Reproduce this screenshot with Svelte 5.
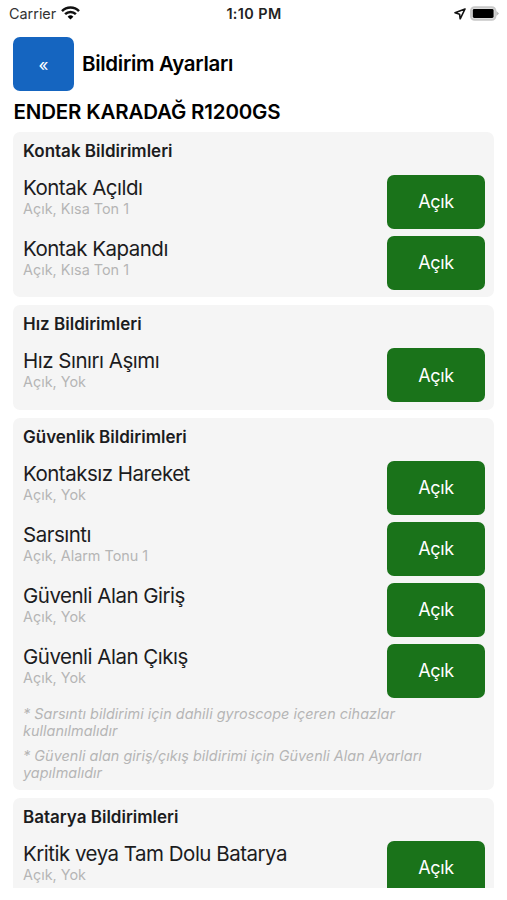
<script>
  const device = 'ENDER KARADAĞ R1200GS';

  let groups = $state([
    {
      title: 'Kontak Bildirimleri',
      items: [
        { name: 'Kontak Açıldı', tone: 'Kısa Ton 1', on: true },
        { name: 'Kontak Kapandı', tone: 'Kısa Ton 1', on: true },
      ],
      notes: [],
    },
    {
      title: 'Hız Bildirimleri',
      items: [{ name: 'Hız Sınırı Aşımı', tone: 'Yok', on: true }],
      notes: [],
    },
    {
      title: 'Güvenlik Bildirimleri',
      items: [
        { name: 'Kontaksız Hareket', tone: 'Yok', on: true },
        { name: 'Sarsıntı', tone: 'Alarm Tonu 1', on: true },
        { name: 'Güvenli Alan Giriş', tone: 'Yok', on: true },
        { name: 'Güvenli Alan Çıkış', tone: 'Yok', on: true },
      ],
      notes: [
        '* Sarsıntı bildirimi için dahili gyroscope içeren cihazlar kullanılmalıdır',
        '* Güvenli alan giriş/çıkış bildirimi için Güvenli Alan Ayarları yapılmalıdır',
      ],
    },
    {
      title: 'Batarya Bildirimleri',
      items: [{ name: 'Kritik veya Tam Dolu Batarya', tone: 'Yok', on: true }],
      notes: [],
    },
  ]);

  const label = (on) => (on ? 'Açık' : 'Kapalı');
</script>

<div class="screen">
  <div class="status">
    <div class="carrier">
      <span>Carrier</span>
      <svg width="19" height="14" viewBox="0 0 19 14">
        <path d="M1 5.1a12 12 0 0 1 17 0" />
        <path d="M4.1 8.2a7.6 7.6 0 0 1 10.8 0" />
        <path class="fill" d="M9.5 13.6 6.6 10.7a4.1 4.1 0 0 1 5.8 0z" />
      </svg>
    </div>
    <div class="clock">1:10 PM</div>
    <div class="power">
      <svg width="12" height="12" viewBox="0 0 12 12">
        <path class="arrow" d="M11 1 1 4.8 5.6 6.2 6.2 10.8z" />
      </svg>
      <svg width="29" height="16" viewBox="0 0 29 16">
        <rect class="shell" x="1" y="1.2" width="24.4" height="12.6" rx="3.6" />
        <rect class="fill" x="2.8" y="3" width="20.8" height="9" rx="1.4" />
        <path class="cap" d="M26.4 5 29 7.5 26.4 10z" />
      </svg>
    </div>
  </div>

  <header>
    <button class="back">«</button>
    <h1>Bildirim Ayarları</h1>
  </header>

  <main>
    <h2>{device}</h2>
    {#each groups as group}
      <section>
        <h3>{group.title}</h3>
        {#each group.items as item}
          <div class="row">
            <div class="info">
              <div class="name">{item.name}</div>
              <div class="detail">{label(item.on)}, {item.tone}</div>
            </div>
            <button class="toggle" class:off={!item.on} onclick={() => (item.on = !item.on)}>
              {label(item.on)}
            </button>
          </div>
        {/each}
        {#each group.notes as note}
          <p>{note}</p>
        {/each}
      </section>
    {/each}
  </main>
</div>

<style>
  :global(body) {
    background: #fff;
  }

  .screen {
    display: flex;
    flex-direction: column;
    box-sizing: border-box;
    height: 900px;
    padding: 0 13px 12px;
    overflow: hidden;
    font-family: Inter, sans-serif;
    color: #1c1c1e;
  }

  .status {
    display: grid;
    grid-template-columns: 1fr auto 1fr;
    align-items: center;
    flex: none;
    height: 27px;
    margin: 0 -5px 0 -4px;
    font-size: 14.4px;
    color: #333;
  }

  .carrier,
  .power {
    display: flex;
    align-items: center;
    gap: 5px;
  }

  .carrier svg {
    margin-top: -2px;
  }

  .power {
    justify-content: flex-end;
    gap: 4px;
  }

  .clock {
    font-weight: 600;
    letter-spacing: 0.4px;
    color: #222;
  }

  svg path {
    fill: none;
    stroke: #111;
    stroke-width: 2.5;
  }

  svg .fill {
    fill: #000;
    stroke: none;
  }

  svg .arrow {
    stroke-width: 1.6;
    stroke-linejoin: round;
  }

  .shell {
    fill: #e4e4e4;
    stroke: #c8c8c8;
    stroke-width: 2;
  }

  svg .cap {
    fill: #b8b8b8;
    stroke: none;
  }

  header {
    display: flex;
    align-items: center;
    flex: none;
    gap: 8px;
    height: 54px;
    margin-top: 10.4px;
  }

  button {
    padding: 0;
    border: none;
    border-radius: 7px;
    font-family: inherit;
    color: #fff;
    cursor: pointer;
  }

  .back {
    width: 61px;
    height: 54px;
    padding-top: 1px;
    background: #1565c0;
    font-size: 17px;
  }

  h1,
  h2,
  h3,
  p {
    margin: 0;
  }

  h1 {
    padding-bottom: 2px;
    font-size: 20.5px;
    font-weight: 600;
    letter-spacing: -0.3px;
    color: #000;
  }

  main {
    flex: 1;
    min-height: 0;
    overflow: hidden;
  }

  h2 {
    height: 33px;
    margin-top: 7.6px;
    padding-left: 0.5px;
    font-size: 20.5px;
    line-height: 26px;
    font-weight: 600;
    letter-spacing: -0.17px;
    color: #000;
  }

  section {
    margin-bottom: 8px;
    padding: 9px 9px 0.4px 10px;
    border-radius: 7px;
    background: #f5f5f5;
  }

  h3 {
    height: 34px;
    font-size: 17px;
    line-height: 21px;
    font-weight: 600;
  }

  .row {
    display: flex;
    justify-content: space-between;
    height: 54px;
    margin-bottom: 7px;
  }

  .name {
    font-size: 20.5px;
    line-height: 26px;
    letter-spacing: -0.5px;
  }

  .detail {
    font-size: 14.4px;
    line-height: 16px;
    color: #b5b5b5;
  }

  .toggle {
    width: 98px;
    height: 54px;
    background: #1a731a;
    font-size: 18px;
    letter-spacing: -0.3px;
  }

  .toggle.off {
    background: #8e8e93;
  }

  p {
    margin-bottom: 8px;
    font-size: 14.4px;
    line-height: 17.2px;
    font-style: italic;
    letter-spacing: 0.04px;
    color: #b5b5b5;
  }
</style>
